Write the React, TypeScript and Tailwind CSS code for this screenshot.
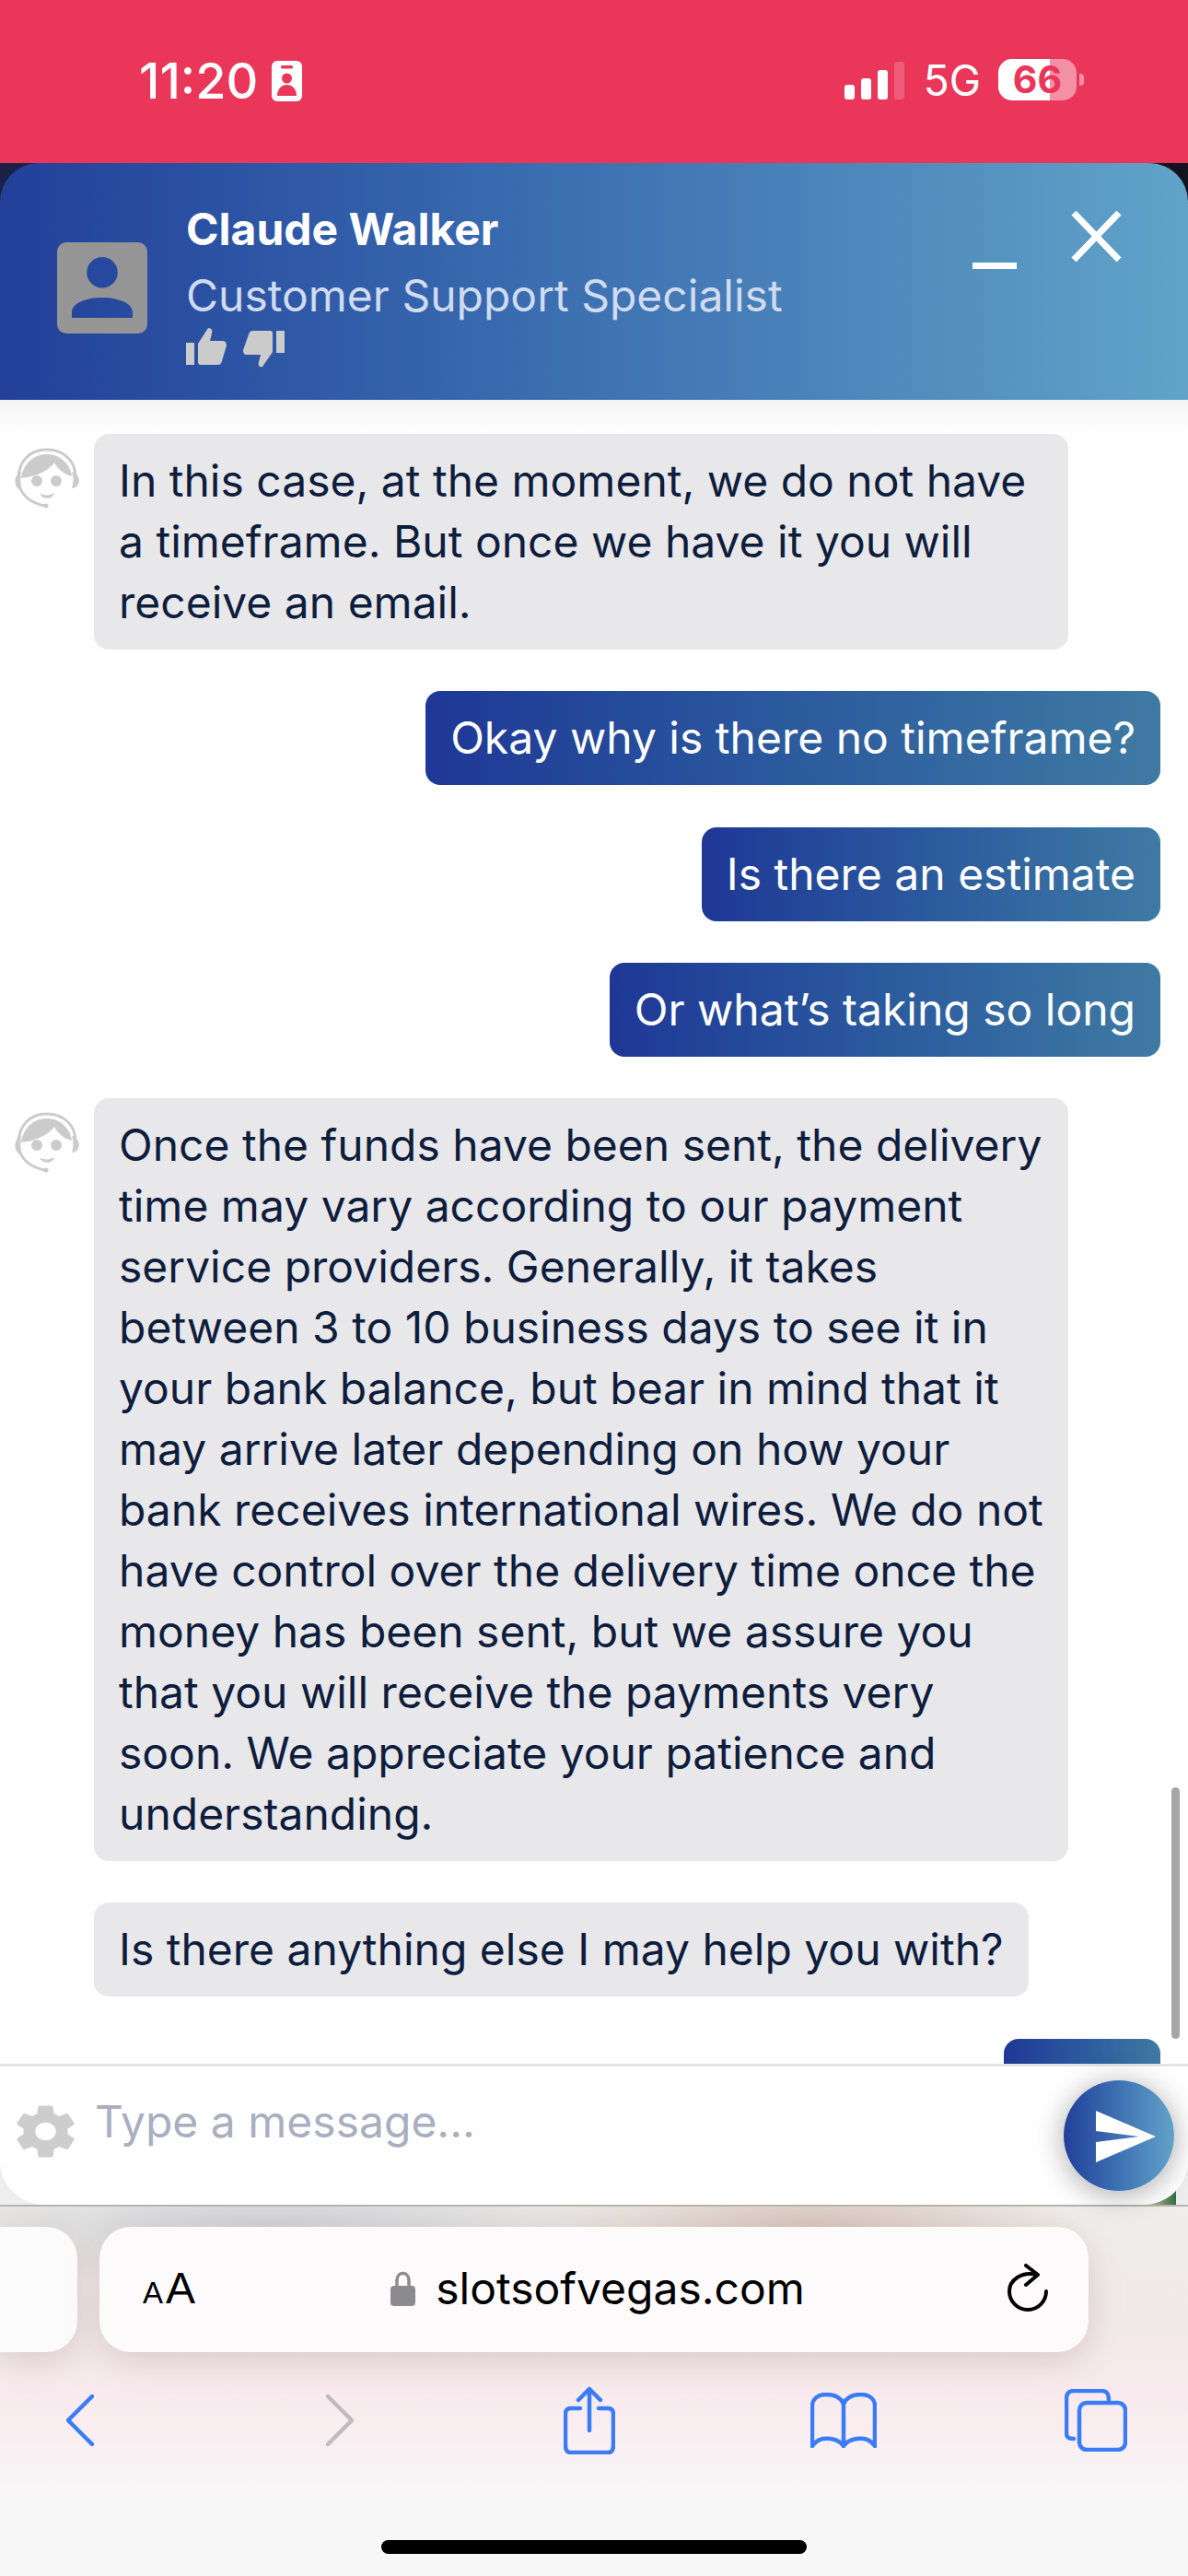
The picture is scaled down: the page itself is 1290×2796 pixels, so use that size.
import React from "react";

const Agent = () => (
  <svg width="72" height="66" viewBox="0 0 72 66" className="shrink-0 mt-[15px]">
    <path d="M5 34 C5 14 18 2 36 2 C54 2 67 14 67 32" fill="none" stroke="#cbcbcb" strokeWidth="3" />
    <path d="M8 33 C10 17 22 7 36 7 C50 7 61 17 63 31 C54 29 47 22 44 16 C38 25 22 32 8 33 Z" fill="#cbcbcb" />
    <path d="M8 26 C1 28 -1 40 5 45 L9 46 C7 40 7 32 8 26 Z" fill="#cbcbcb" />
    <path d="M63 26 C71 28 74 38 67 43 L63 44 C65 38 65 32 63 26 Z" fill="#cbcbcb" />
    <path d="M7 44 C11 54 20 60 33 63" fill="none" stroke="#cbcbcb" strokeWidth="3" strokeLinecap="round" />
    <circle cx="35" cy="63" r="2.5" fill="#cbcbcb" />
    <circle cx="25" cy="36" r="6" fill="#cbcbcb" />
    <circle cx="46" cy="36" r="6" fill="#cbcbcb" />
    <path d="M28 50 C34 52 39 52 44 49 C43 56 31 57 28 50 Z" fill="#cbcbcb" />
  </svg>
);

const AgentBubble = ({ children, icon }: { children: React.ReactNode; icon?: boolean }) => (
  <div className="flex items-start">
    <div className="w-[102px] shrink-0 pl-[15px]">{icon && <Agent />}</div>
    <div className={icon ? "w-[1058px] rounded-[16px] bg-[#e8e8eb] px-[27px] py-[18px] text-[#0f1d3d]" : "max-w-[1058px] rounded-[16px] bg-[#e8e8eb] px-[27px] py-[18px] text-[#0f1d3d]"}>{children}</div>
  </div>
);

const UserBubble = ({ children }: { children: React.ReactNode }) => (
  <div className="flex justify-end pr-[30px]">
    <div className="rounded-[16px] bg-gradient-to-r from-[#1f3796] to-[#3f7aa3] px-[27px] py-[18px] text-white">{children}</div>
  </div>
);

export default function App() {
  return (
    <div className="flex h-[2796px] w-[1290px] flex-col overflow-hidden bg-white font-['Inter',sans-serif]">
      {/* status bar */}
      <div className="flex h-[177px] shrink-0 items-start justify-between bg-[#e93659] pl-[151px] pr-[113px] pt-[64px] text-white">
        <div className="flex items-center gap-[15px]">
          <span className="text-[54px] font-medium leading-[48px]">11:20</span>
          <svg width="33" height="44" viewBox="0 0 33 44">
            <rect width="33" height="44" rx="6" fill="#fff" />
            <rect x="10" y="5" width="13" height="3.5" rx="1.5" fill="#e93659" />
            <circle cx="16.5" cy="19" r="5.5" fill="#e93659" />
            <path d="M6 38 C6 22 27 22 27 38 Z" fill="#e93659" />
          </svg>
        </div>
        <div className="flex items-center">
          <svg width="65" height="44" viewBox="0 0 65 44">
            <rect x="0" y="27" width="11" height="16" rx="3" fill="#fff" />
            <rect x="18" y="20" width="11" height="23" rx="3" fill="#fff" />
            <rect x="36" y="11" width="11" height="32" rx="3" fill="#fff" />
            <rect x="54" y="2" width="11" height="41" rx="3" fill="#fff" fillOpacity="0.2" />
          </svg>
          <span className="ml-[21px] text-[46px] leading-[44px]">5G</span>
          <div className="relative ml-[19px] flex h-[45px] w-[85px] items-center justify-center rounded-[15px] bg-white/45">
            <div className="absolute inset-y-0 left-0 w-[56px] rounded-l-[15px] bg-white" />
            <span className="relative text-[41px] font-bold leading-[41px] text-[#e93659]">66</span>
          </div>
          <div className="ml-[3px] h-[13px] w-[5px] rounded-r-[4px] bg-white/45" />
        </div>
      </div>

      {/* chat */}
      <div className="flex min-h-0 flex-1 flex-col bg-gradient-to-r from-[#1a2145] to-[#12131f]">
        <div className="flex h-[257px] shrink-0 rounded-t-[42px] bg-gradient-to-r from-[#233f9a] to-[#61a3c8]">
          <div className="ml-[62px] mt-[86px] h-[99px] w-[98px]">
            <svg width="98" height="99" viewBox="0 0 98 99">
              <path
                fillRule="evenodd"
                fill="#959595"
                d="M10 0 H88 A10 10 0 0 1 98 10 V89 A10 10 0 0 1 88 99 H10 A10 10 0 0 1 0 89 V10 A10 10 0 0 1 10 0 Z M49 16 A16.5 16.5 0 1 0 49 49.5 A16.5 16.5 0 1 0 49 16 Z M16 82 H82 V76 C82 66 66 60 49 60 C32 60 16 66 16 76 Z"
              />
            </svg>
          </div>
          <div className="ml-[42px] flex flex-col">
            <div className="mt-[44px] text-[48px] font-bold leading-[56px] text-white">Claude Walker</div>
            <div className="mt-[16px] text-[48px] leading-[56px] text-[#d0dbef]">Customer Support Specialist</div>
            <div className="mt-[7px] flex items-start gap-[18px]">
              <svg width="44" height="40" viewBox="0 0 44 40" fill="#cbcbcb">
                <rect x="0" y="16" width="9" height="24" />
                <path d="M13 17 L24 0 C28 0 29 3 28 6 L26 14 H40 C43 14 44 17 44 19 L39 36 C38 39 37 40 34 40 H16 C14 40 13 39 13 37 Z" />
              </svg>
              <svg width="46" height="40" viewBox="0 0 46 40" fill="#cbcbcb" className="mt-[3px]">
                <rect x="36" y="0" width="9" height="24" />
                <path d="M32 23 L21 39 C17 40 16 37 17 34 L19 26 H4 C1 26 0 24 0 21 L6 4 C7 1 8 0 11 0 H30 C31 0 32 1 32 3 Z" />
              </svg>
            </div>
          </div>
          <div className="ml-auto flex items-start pr-[72px]">
            <div className="mt-[108px] h-[7px] w-[48px] bg-white" />
            <svg width="55" height="55" viewBox="0 0 55 55" className="ml-[59px] mt-[52px]">
              <path d="M3 2 L52 53 M52 2 L3 53" stroke="#fff" strokeWidth="7" />
            </svg>
          </div>
        </div>

        <div className="relative min-h-0 flex-1 bg-white">
          <div className="absolute inset-x-0 top-0 h-[36px] bg-gradient-to-b from-[#f4f4f4] to-white" />
          <div className="relative flex h-full flex-col gap-[45.3px] overflow-hidden pt-[37px] text-[48px] leading-[66px]">
            <AgentBubble icon>
              In this case, at the moment, we do not have
              <br />a timeframe. But once we have it you will
              <br />receive an email.
            </AgentBubble>
            <UserBubble>Okay why is there no timeframe?</UserBubble>
            <UserBubble>Is there an estimate</UserBubble>
            <UserBubble>Or what’s taking so long</UserBubble>
            <AgentBubble icon>
              Once the funds have been sent, the delivery
              <br />time may vary according to our payment
              <br />service providers. Generally, it takes
              <br />between 3 to 10 business days to see it in
              <br />your bank balance, but bear in mind that it
              <br />may arrive later depending on how your
              <br />bank receives international wires. We do not
              <br />have control over the delivery time once the
              <br />money has been sent, but we assure you
              <br />that you will receive the payments very
              <br />soon. We appreciate your patience and
              <br />understanding.
            </AgentBubble>
            <AgentBubble>Is there anything else I may help you with?</AgentBubble>
            <div className="flex justify-end pr-[30px]">
              <div className="h-[102px] w-[170px] shrink-0 rounded-[16px] bg-gradient-to-r from-[#1f3796] to-[#3f7aa3]" />
            </div>
          </div>
          <div className="absolute right-[9px] top-[1506px] h-[273px] w-[9px] rounded-full bg-[#a6a6a6]" />
        </div>

        {/* input */}
        <div className="relative h-[153px] shrink-0 bg-[#eeeeee]">
          <div className="absolute bottom-0 right-[13px] h-[16px] w-[36px] bg-gradient-to-r from-[#e8d5b8] to-[#2f6b45]" />
          <div className="relative flex h-full items-start rounded-b-[48px] border-t-[3px] border-[#e1e4e8] bg-white pl-[11px]">
            <svg width="77" height="67" viewBox="0 0 24 24" preserveAspectRatio="none" fill="#cdcdcd" className="mt-[37px]">
              <path
                fillRule="evenodd"
                d="M19.43 12.98c.04-.32.07-.64.07-.98s-.03-.66-.07-.98l2.11-1.65c.19-.15.24-.42.12-.64l-2-3.46c-.12-.22-.39-.3-.61-.22l-2.49 1c-.52-.4-1.08-.73-1.69-.98l-.38-2.65C14.46 2.18 14.25 2 14 2h-4c-.25 0-.46.18-.49.42l-.38 2.65c-.61.25-1.17.59-1.69.98l-2.49-1c-.23-.09-.49 0-.61.22l-2 3.46c-.13.22-.07.49.12.64l2.11 1.65c-.04.32-.07.65-.07.98s.03.66.07.98l-2.11 1.65c-.19.15-.24.42-.12.64l2 3.46c.12.22.39.3.61.22l2.49-1c.52.4 1.08.73 1.69.98l.38 2.65c.03.24.24.42.49.42h4c.25 0 .46-.18.49-.42l.38-2.65c.61-.25 1.17-.59 1.69-.98l2.49 1c.23.09.49 0 .61-.22l2-3.46c.12-.22.07-.49-.12-.64l-2.11-1.65zM12 15.5c-1.93 0-3.5-1.57-3.5-3.5s1.57-3.5 3.5-3.5 3.5 1.57 3.5 3.5-1.57 3.5-3.5 3.5z"
              />
            </svg>
            <span className="ml-[15px] mt-[32px] text-[48px] leading-[56px] text-[#a9afc0]">Type a message...</span>
            <div className="ml-auto mr-[15px] mt-[15px] h-[120px] w-[120px] rounded-full bg-gradient-to-r from-[#233f9a] to-[#61a3c8] shadow-[0_4px_32px_rgba(0,0,0,0.35)]">
              <svg width="120" height="120" viewBox="0 0 120 120">
                <path d="M35 33 L100 61 L35 89 V67 L82 61 L35 55 Z" fill="#fff" />
              </svg>
            </div>
          </div>
        </div>
      </div>

      {/* safari */}
      <div className="flex h-[403px] shrink-0 flex-col border-t-2 border-[#b8b3ac] bg-[radial-gradient(ellipse_300px_90px_at_880px_30px,#d6c3ba,transparent),radial-gradient(ellipse_420px_70px_at_290px_20px,#d0d2d6,transparent),linear-gradient(to_bottom,#efeeea_0%,#f1eae8_30%,#f8eaee_50%,#f9eef1_62%,#f7f7f7_80%)]">
        <div className="mt-[22px] flex h-[136px] shrink-0 gap-[24px]">
          <div className="w-[84px] rounded-r-[34px] bg-[#fcfbfb] shadow-[0_10px_36px_rgba(120,70,80,0.2)]" />
          <div className="flex w-[1074px] items-center justify-between rounded-[34px] bg-[#fcfafa] pb-[2px] pl-[47px] pr-[44px] shadow-[0_10px_36px_rgba(120,70,80,0.2)]">
            <div className="flex items-baseline gap-[3px] font-['Liberation_Sans',sans-serif] leading-none text-black">
              <span className="text-[33px]">A</span>
              <span className="text-[48px]">A</span>
            </div>
            <div className="flex items-center gap-[22px] pr-[8px]">
              <svg width="27" height="38" viewBox="0 0 27 38">
                <path d="M7 18 V10 C7 0 20 0 20 10 V18" fill="none" stroke="#8c8c90" strokeWidth="3.5" />
                <rect x="0" y="16" width="27" height="22" rx="4" fill="#8c8c90" />
              </svg>
              <span className="text-[48px] leading-[60px] text-black">slotsofvegas.com</span>
            </div>
            <svg width="44" height="54" viewBox="0 0 44 54" fill="none" stroke="#000" strokeWidth="4" strokeLinecap="round" strokeLinejoin="round">
              <path d="M32 12 C15 8 2 18 2 30 A20 20 0 0 0 42 30" />
              <path d="M20 2 L33 12 L20 23" />
            </svg>
          </div>
        </div>
        <div className="mt-[37px] flex shrink-0 items-center">
          <svg width="30" height="56" viewBox="0 0 30 56" fill="none" stroke="#3a7cf6" strokeWidth="4.5" strokeLinecap="round" strokeLinejoin="round" className="ml-[72px]">
            <path d="M28 2 L2 28 L28 54" />
          </svg>
          <svg width="30" height="56" viewBox="0 0 30 56" fill="none" stroke="#bdbdbf" strokeWidth="4.5" strokeLinecap="round" strokeLinejoin="round" className="ml-[252px]">
            <path d="M2 2 L28 28 L2 54" />
          </svg>
          <svg width="56" height="74" viewBox="0 0 56 74" fill="none" stroke="#3a7cf6" strokeWidth="4.5" strokeLinecap="round" strokeLinejoin="round" className="ml-[228px]">
            <path d="M18 24 H8 C4 24 2 26 2 30 V64 C2 70 4 72 8 72 H48 C52 72 54 70 54 64 V30 C54 26 52 24 48 24 H38" />
            <path d="M28 48 V3 M16 15 L28 3 L40 15" />
          </svg>
          <svg width="72" height="60" viewBox="0 0 72 60" fill="none" stroke="#3a7cf6" strokeWidth="4.5" strokeLinecap="round" strokeLinejoin="round" className="ml-[212px]">
            <path d="M36 12 C33 5 26 2 17 2 C8 2 2 7 2 14 V58 C8 50 14 49 22 50 C28 51 33 53 36 58 C39 53 44 51 50 50 C58 49 64 50 70 58 V14 C70 7 64 2 55 2 C46 2 39 5 36 12 Z M36 12 V58" />
          </svg>
          <svg width="68" height="68" viewBox="0 0 68 68" fill="none" stroke="#3a7cf6" strokeWidth="4.5" strokeLinecap="round" strokeLinejoin="round" className="ml-[204px]">
            <path d="M10 54 C4 54 2 52 2 48 V10 C2 5 5 2 10 2 H40 C46 2 48 5 48 12" />
            <rect x="16" y="15" width="50" height="51" rx="8" />
          </svg>
        </div>
        <div className="mt-auto mb-[24px] ml-[414px] h-[15px] w-[462px] rounded-full bg-black" />
      </div>
    </div>
  );
}
